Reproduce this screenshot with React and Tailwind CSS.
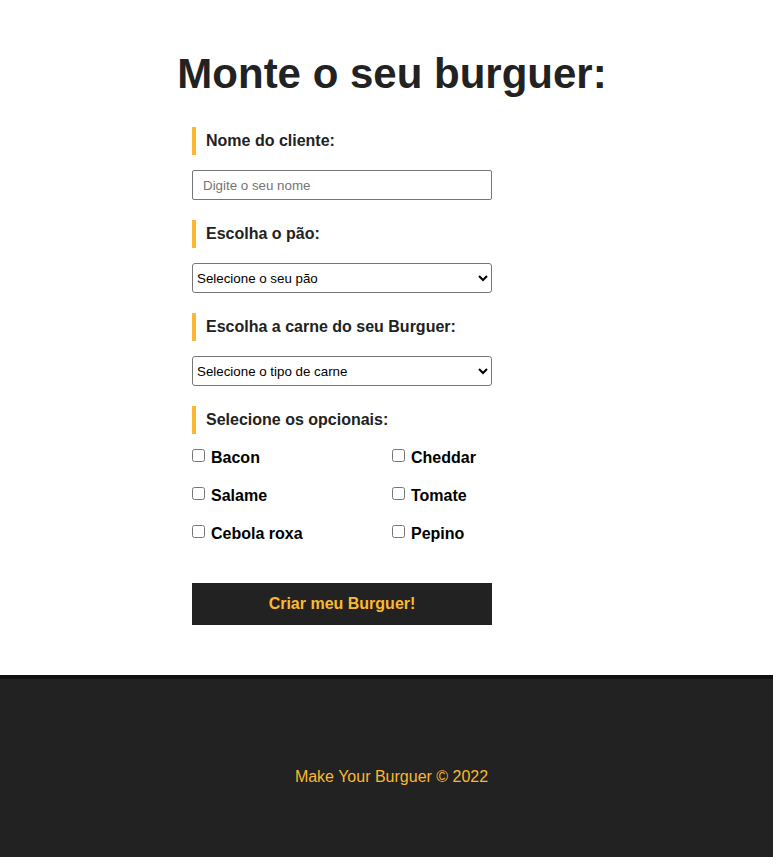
import React from "react";

function Label({ children }) {
  return (
    <label className="block border-l-4 border-[#FBB830] px-[10px] py-[5px] mb-[15px] font-bold text-[16px] leading-[18px] text-[#222]">
      {children}
    </label>
  );
}

const opcionais = [
  ["Bacon", "Cheddar"],
  ["Salame", "Tomate"],
  ["Cebola roxa", "Pepino"],
];

export default function App() {
  return (
    <div className="font-['Liberation_Sans',Arial,sans-serif] bg-white">
      <main className="pl-[11px] pt-[50px] h-[675px]">
        <h1 className="text-center text-[42px] leading-[48px] font-bold text-[#222]">
          Monte o seu burguer:
        </h1>
        <form className="w-[400px] mx-auto mt-[29px]" onSubmit={(e) => e.preventDefault()}>
          <div className="mb-[20px]">
            <Label>Nome do cliente:</Label>
            <input
              type="text"
              placeholder="Digite o seu nome"
              className="block w-[300px] h-[30px] border border-[#767676] rounded-[2px] px-[10px] text-[13.333px] text-black placeholder:text-[#757575]"
            />
          </div>
          <div className="mb-[20px]">
            <Label>Escolha o pão:</Label>
            <select className="block w-[300px] h-[30px] border border-[#767676] rounded-[3px] pl-0 pr-[4px] text-[13.333px] text-black bg-white">
              <option>Selecione o seu pão</option>
            </select>
          </div>
          <div className="mb-[20px]">
            <Label>Escolha a carne do seu Burguer:</Label>
            <select className="block w-[300px] h-[30px] border border-[#767676] rounded-[3px] pl-0 pr-[4px] text-[13.333px] text-black bg-white">
              <option>Selecione o tipo de carne</option>
            </select>
          </div>
          <div>
            <Label>Selecione os opcionais:</Label>
            <div className="flex flex-wrap">
              {opcionais.flat().map((item) => (
                <div key={item} className="w-1/2 flex items-start mb-[20px]">
                  <input type="checkbox" className="m-0 w-[13px] h-[13px]" />
                  <span className="ml-[6px] font-bold text-[16px] leading-[18px] text-black">
                    {item}
                  </span>
                </div>
              ))}
            </div>
          </div>
          <button
            type="submit"
            className="block mt-[20px] w-[300px] h-[42px] bg-[#222] border-2 border-[#222] text-[#FBB830] font-bold text-[16px] p-[10px] leading-[18px]"
          >
            Criar meu Burguer!
          </button>
        </form>
      </main>
      <footer className="border-t-4 border-[#111] bg-[#222] h-[182px] pt-[89px] pl-[10px] text-center text-[#FBB830] text-[16px] leading-[18px]">
        Make Your Burguer © 2022
      </footer>
    </div>
  );
}
